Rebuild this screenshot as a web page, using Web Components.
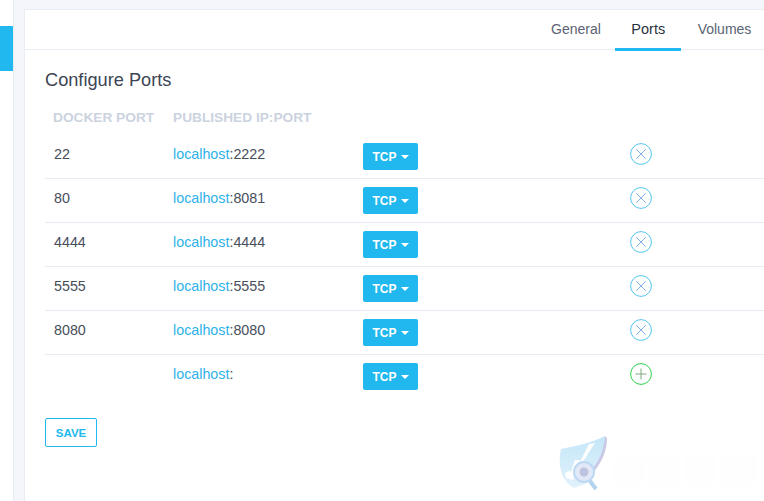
<!DOCTYPE html>
<html>
<head>
<meta charset="utf-8">
<title>Configure Ports</title>
<style>
  html, body { margin: 0; padding: 0; height: 100%; overflow: hidden; }
  body { background: #f4f6fb; font-family: "Liberation Sans", Arial, sans-serif; color: #3f4756; }
</style>
</head>
<body>
<app-shell>
  <side-rail slot="rail"></side-rail>
  <settings-card>
    <tab-bar slot="head">
      <tab-item>General</tab-item>
      <tab-item active>Ports</tab-item>
      <tab-item>Volumes</tab-item>
    </tab-bar>
    <h-title>Configure Ports</h-title>
    <port-head></port-head>
    <port-row docker="22" port="2222"></port-row>
    <port-row docker="80" port="8081"></port-row>
    <port-row docker="4444" port="4444"></port-row>
    <port-row docker="5555" port="5555"></port-row>
    <port-row docker="8080" port="8080"></port-row>
    <port-row add></port-row>
    <save-button>SAVE</save-button>
    <water-mark></water-mark>
  </settings-card>
</app-shell>

<script>
class AppShell extends HTMLElement {
  constructor() {
    super();
    this.attachShadow({ mode: 'open' }).innerHTML = `
<style>
  :host { display: flex; height: 501px; width: 764px; overflow: hidden; }
  ::slotted(settings-card) { flex: none; margin: 9px 0 0 10px; }
</style>
<slot name="rail"></slot><slot></slot>`;
  }
}

class SideRail extends HTMLElement {
  constructor() {
    super();
    this.attachShadow({ mode: 'open' }).innerHTML = `
<style>
  :host { display: block; flex: none; width: 13px; height: 100%; background: #fff; border-right: 1px solid #e8ecf3; padding-top: 26px; box-sizing: content-box; }
  .mark { height: 45px; background: #20b8ee; }
</style>
<div class="mark"></div>`;
  }
}

class SettingsCard extends HTMLElement {
  constructor() {
    super();
    this.attachShadow({ mode: 'open' }).innerHTML = `
<style>
  :host { display: block; position: relative; width: 780px; height: 500px; background: #fff; border: 1px solid #e8ecf3; border-right: 0; border-bottom: 0; box-sizing: border-box; }
  .body { padding: 0 0 0 20px; }
</style>
<slot name="head"></slot>
<div class="body"><slot></slot></div>`;
  }
}

class TabBar extends HTMLElement {
  constructor() {
    super();
    this.attachShadow({ mode: 'open' }).innerHTML = `
<style>
  :host { display: flex; height: 39px; padding-left: 509.5px; border-bottom: 1px solid #e8ecf3; box-sizing: content-box; }
</style>
<slot></slot>`;
  }
}

class TabItem extends HTMLElement {
  constructor() {
    super();
    this.attachShadow({ mode: 'open' }).innerHTML = `
<style>
  :host { display: block; height: 38px; padding: 0 16.5px; line-height: 39px; font-size: 14px; color: #5a6373; border-bottom: 3px solid transparent; white-space: nowrap; }
  :host(:first-child) { padding-right: 14px; }
  :host([active]) { padding-right: 16px; font-size: 14.5px; color: #2a3240; border-bottom-color: #20b8ee; }
</style>
<slot></slot>`;
  }
}

class HTitle extends HTMLElement {
  constructor() {
    super();
    this.attachShadow({ mode: 'open' }).innerHTML = `
<style>
  :host { display: block; height: 20px; margin-top: 20px; line-height: 20px; font-size: 18.2px; color: #3d4554; white-space: nowrap; }
</style>
<slot></slot>`;
  }
}

class PortHead extends HTMLElement {
  constructor() {
    super();
    this.attachShadow({ mode: 'open' }).innerHTML = `
<style>
  :host { display: grid; grid-template-columns: 120px auto; height: 20px; margin: 18px 0 7px; padding-left: 8px; line-height: 20px; font-size: 13.7px; font-weight: 700; color: #cbd3df; white-space: nowrap; }
</style>
<span>DOCKER PORT</span><span>PUBLISHED IP:PORT</span>`;
  }
}

const ROW_ICONS = {
  remove: '<circle cx="11" cy="11" r="10.4" stroke="#56c6f0"/><path d="M6.2 6.2l9.6 9.6M15.8 6.2l-9.6 9.6" stroke="#7fb0e8"/>',
  add: '<circle cx="11" cy="11" r="10.4" stroke="#2fd24f"/><path d="M11 5.5v11M5.5 11h11" stroke="#7fa87f"/>',
};

class PortRow extends HTMLElement {
  constructor() {
    super();
    const add = this.hasAttribute('add');
    const docker = this.getAttribute('docker') || '';
    const port = this.getAttribute('port') || '';
    this.attachShadow({ mode: 'open' }).innerHTML = `
<style>
  :host { display: grid; grid-template-columns: 119px 190px 267px 22px; align-items: center; height: 44px; padding-left: 9px; font-size: 14.3px; color: #474e5c; box-sizing: border-box; border-bottom: 1px solid #e6ebf3; }
  :host([add]) { border-bottom-color: transparent; }
  .cell { position: relative; top: -3px; }
  .link { color: #2db2ea; }
  .btn { display: flex; align-items: center; justify-content: center; gap: 4px; width: 55px; height: 27px; background: #20b8ee; border-radius: 2px; color: #fff; font-size: 12px; font-weight: 700; }
  .caret { width: 0; height: 0; border: 4px solid transparent; border-top-color: #fff; border-bottom: 0; }
  svg { display: block; position: relative; top: -3px; }
  svg * { fill: none; stroke-width: 1; }
</style>
<span class="cell">${docker}</span>
<span class="cell"><span class="link">localhost</span>:${port}</span>
<div class="btn">TCP<span class="caret"></span></div>
<svg width="22" height="22" viewBox="0 0 22 22">${add ? ROW_ICONS.add : ROW_ICONS.remove}</svg>`;
  }
}

class SaveButton extends HTMLElement {
  constructor() {
    super();
    this.attachShadow({ mode: 'open' }).innerHTML = `
<style>
  :host { display: block; box-sizing: border-box; width: 52px; height: 29px; margin-top: 19px; line-height: 28px; text-align: center; border: 1px solid #20b8ee; border-radius: 2px; color: #20b8ee; font-size: 11.5px; font-weight: 700; }
</style>
<slot></slot>`;
  }
}

class WaterMark extends HTMLElement {
  constructor() {
    super();
    this.attachShadow({ mode: 'open' }).innerHTML = `
<style>
  :host { display: block; position: absolute; left: 532px; top: 424px; width: 205px; height: 70px; }
  svg { display: block; }
</style>
<svg width="205" height="70" viewBox="0 0 205 70">
  <defs>
    <linearGradient id="shield" x1="0" y1="0" x2="0" y2="1">
      <stop offset="0" stop-color="#c4e6f8"/>
      <stop offset="1" stop-color="#e2f2fb"/>
    </linearGradient>
  </defs>
  <path d="M4 15C20 12 36 8 48 2C48 20 40 38 28 50L17 54C6 48 0 34 4 15Z" fill="url(#shield)"/>
  <path d="M48 2L50 4C50 16 45 28 38 36L36 34C43 26 47 14 48 2Z" fill="#c9c9e6"/>
  <path d="M8 39L12 37L14 38L18 26L23 26L21 32L32 10L38 9L27 26L22 32L16 46L9 44Z" fill="#fff"/>
  <circle cx="27" cy="38" r="10" fill="#e2e8f7" stroke="#bcd8f2" stroke-width="2"/>
  <circle cx="27" cy="38" r="4.5" fill="#bcc2e0"/>
  <path d="M33 47L39 55" stroke="#b4d3ee" stroke-width="4"/>
  <path d="M56 23h32v29h-32zM92 23h30v29h-30zM128 22h31v30h-31zM165 21h35v31h-35z" fill="#fefefe"/>
</svg>`;
  }
}

customElements.define('app-shell', AppShell);
customElements.define('side-rail', SideRail);
customElements.define('settings-card', SettingsCard);
customElements.define('tab-bar', TabBar);
customElements.define('tab-item', TabItem);
customElements.define('h-title', HTitle);
customElements.define('port-head', PortHead);
customElements.define('port-row', PortRow);
customElements.define('save-button', SaveButton);
customElements.define('water-mark', WaterMark);
</script>
</body>
</html>
